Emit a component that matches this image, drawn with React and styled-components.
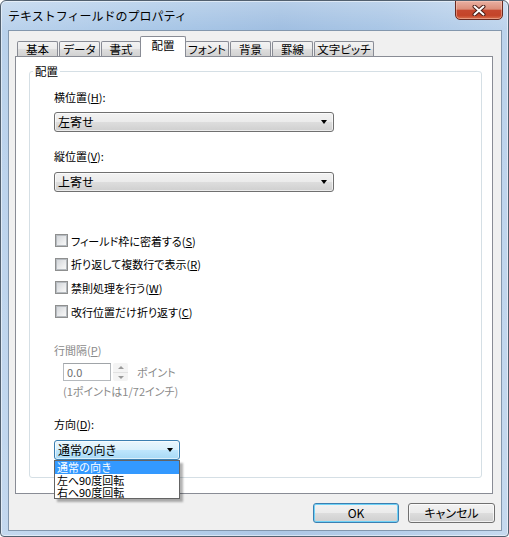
import React from 'react';
import styled, { createGlobalStyle } from 'styled-components';

const GlobalStyle = createGlobalStyle`
  html, body {
    margin: 0;
    padding: 0;
    background: #ffffff;
  }
  body {
    font-family: "Noto Sans CJK JP", "Liberation Sans", sans-serif;
    font-size: 11px;
    color: #000;
    font-feature-settings: "palt";
  }
  * {
    box-sizing: border-box;
  }
`;

const WindowS = styled.div`
  width: 509px;
  height: 537px;
  display: flex;
  flex-direction: column;
  border: 1px solid #52606f;
  border-radius: 6px 6px 4px 4px;
  overflow: hidden;
  background:
    linear-gradient(to bottom, rgba(255,255,255,0.25), rgba(255,255,255,0) 30px, rgba(255,255,255,0.15) 100%),
    linear-gradient(to right, #bad2ec 0%, #a9c7e7 30%, #9fbee1 55%, #a8c5e5 75%, #bcd3ec 100%);
  box-shadow: inset 0 0 0 1px rgba(255,255,255,0.5);
`;

const TitleBarS = styled.div`
  height: 29px;
  flex-shrink: 0;
  display: flex;
  align-items: flex-start;
  padding: 0 5px 0 7px;
`;

const TitleS = styled.div`
  flex: 1;
  align-self: center;
  font-size: 12px;
  line-height: 14px;
  margin-top: 1px;
  color: #000;
  font-feature-settings: normal;
`;

const CloseButtonS = styled.div`
  width: 48px;
  height: 20px;
  margin-top: -1px;
  border: 1px solid #6a2a20;
  border-radius: 0 0 5px 5px;
  background: linear-gradient(to bottom, #e9b0a2 0%, #dc8e7a 45%, #c6482f 52%, #c44429 80%, #d9704e 100%);
  box-shadow: inset 0 0 0 1px rgba(255, 210, 195, 0.45);
  display: flex;
  align-items: center;
  justify-content: center;
`;

const ClientS = styled.div`
  flex: 1;
  margin: 0 6px 5px 7px;
  background: #f0f0f0;
  border: 1px solid #8397ad;
  padding: 5px 8px 0 6px;
  display: flex;
  flex-direction: column;
`;

const TabStripS = styled.div`
  display: flex;
  align-items: flex-end;
  height: 20px;
  padding-left: 2px;
  gap: 1px;
  position: relative;
  z-index: 1;
`;

const TabS = styled.div`
  width: ${({ $w }) => $w}px;
  height: ${({ $active }) => ($active ? 21 : 15)}px;
  margin: ${({ $active }) => ($active ? '0 -2px -1px -2px' : '0')};
  padding-top: ${({ $active }) => ($active ? 2 : 1)}px;
  border: 1px solid #898c95;
  border-bottom: none;
  border-radius: 2px 2px 0 0;
  background: ${({ $active }) =>
    $active ? '#ffffff' : 'linear-gradient(to bottom, #f3f3f3 0%, #ebebeb 50%, #dedede 51%, #d2d2d2 100%)'};
  display: flex;
  justify-content: center;
  align-items: flex-start;
  font-size: 11.5px;
  line-height: 13px;
`;

const PanelS = styled.div`
  height: 438px;
  flex-shrink: 0;
  border: 1px solid #898c95;
  background: #ffffff;
  display: flex;
  flex-direction: column;
`;

const GroupBoxS = styled.fieldset`
  flex: 1;
  margin: 8px 10px 15px 13px;
  padding: 0;
  min-width: 0;
  border: 1px solid #d5dfe5;
  border-radius: 3px;
`;

const LegendS = styled.legend`
  margin-left: 3px;
  padding: 0 2px;
  font-size: 11.5px;
  line-height: 13px;
`;

const GroupContentS = styled.div`
  display: flex;
  flex-direction: column;
  align-items: flex-start;
  padding-left: 24px;
`;

const FieldLabelS = styled.div`
  font-size: 11px;
  line-height: 14px;
  margin-top: ${({ $mt }) => $mt}px;
  margin-left: ${({ $ml }) => $ml || 0}px;
  color: ${({ $disabled }) => ($disabled ? '#8a8a8a' : '#000')};
`;

const ComboWrapS = styled.div`
  position: relative;
  margin-top: ${({ $mt }) => $mt}px;
`;

const ComboS = styled.div`
  width: ${({ $w }) => $w}px;
  height: 20px;
  border: 1px solid ${({ $open }) => ($open ? '#3c7fb1' : '#707070')};
  border-radius: 3px;
  background: ${({ $open }) =>
    $open
      ? 'linear-gradient(to bottom, #eaf6fd 0%, #d9f0fc 50%, #bee6fd 51%, #a7d9f5 100%)'
      : 'linear-gradient(to bottom, #f2f2f2 0%, #ebebeb 50%, #dddddd 51%, #cfcfcf 100%)'};
  box-shadow: inset 0 0 0 1px rgba(255, 255, 255, 0.6);
  display: flex;
  align-items: center;
  justify-content: space-between;
  padding: 0 6px 0 3px;
  font-size: 12px;
  line-height: 14px;
`;

const ArrowS = styled.span`
  width: 0;
  height: 0;
  border-left: 3.5px solid transparent;
  border-right: 3.5px solid transparent;
  border-top: 4px solid #000;
`;

const ListS = styled.div`
  position: absolute;
  top: 100%;
  left: 0;
  width: 126px;
  border: 1px solid #646464;
  background: #ffffff;
  box-shadow: 3px 3px 2px rgba(0, 0, 0, 0.3);
  display: flex;
  flex-direction: column;
  z-index: 2;
`;

const ListItemS = styled.div`
  height: 12.3px;
  line-height: 12.3px;
  font-size: 11px;
  padding-left: 2px;
  font-feature-settings: normal;
  background: ${({ $selected }) => ($selected ? '#3399ff' : 'transparent')};
  color: ${({ $selected }) => ($selected ? '#ffffff' : '#000')};
`;

const CheckListS = styled.div`
  display: flex;
  flex-direction: column;
  margin-top: 37px;
  margin-left: 1px;
`;

const CheckRowS = styled.label`
  display: flex;
  align-items: center;
  gap: 3px;
  height: 23.6px;
  font-size: 11px;
  line-height: 14px;
`;

const CheckBoxS = styled.span`
  width: 13px;
  height: 13px;
  border: 1px solid #8e8f8f;
  background: #ffffff;
  display: flex;
  align-items: center;
  justify-content: center;

  &::after {
    content: '';
    width: 9px;
    height: 9px;
    border: 1px solid #b6bbc0;
    background: linear-gradient(135deg, #d3d6da 0%, #eeeff0 70%, #f7f7f7 100%);
  }
`;

const SpinRowS = styled.div`
  display: flex;
  align-items: center;
  height: 18px;
  margin-top: 6px;
  margin-left: 9px;
`;

const SpinInputS = styled.div`
  width: 48px;
  height: 18px;
  border: 1px solid #b5b9bd;
  border-top-color: #a0a4a8;
  background: #ffffff;
  color: #6d6d6d;
  font-size: 11px;
  line-height: 14px;
  padding-left: 3px;
  display: flex;
  align-items: center;
`;

const SpinButtonsS = styled.div`
  width: 15px;
  height: 18px;
  margin-left: 2px;
  display: flex;
  flex-direction: column;
  background: #f4f4f4;
  border-radius: 2px;
`;

const SpinHalfS = styled.div`
  flex: 1;
  display: flex;
  align-items: center;
  justify-content: center;
  border-bottom: ${({ $top }) => ($top ? '1px solid #e2e2e2' : 'none')};
`;

const SpinArrowS = styled.span`
  width: 0;
  height: 0;
  border-left: 3px solid transparent;
  border-right: 3px solid transparent;
  ${({ $up }) => ($up ? 'border-bottom: 3px solid #9a9a9a;' : 'border-top: 3px solid #9a9a9a;')}
`;

const UnitS = styled.span`
  margin-left: 9px;
  color: #8a8a8a;
  font-size: 11px;
  line-height: 14px;
`;

const ButtonRowS = styled.div`
  display: flex;
  justify-content: flex-end;
  gap: 9px;
  margin-top: 9px;
  margin-right: -2px;
`;

const ButtonS = styled.div`
  width: ${({ $w }) => $w}px;
  height: 20px;
  border: 1px solid ${({ $default }) => ($default ? '#3c7fb1' : '#707070')};
  border-radius: 3px;
  background: linear-gradient(to bottom, #f2f2f2 0%, #ebebeb 50%, #dddddd 51%, #cfcfcf 100%);
  box-shadow: inset 0 0 0 1px ${({ $default }) => ($default ? '#6fd2f7' : 'rgba(255,255,255,0.7)')};
  display: flex;
  align-items: center;
  justify-content: center;
  font-size: 12px;
  line-height: 14px;
`;

const tabs = [
  { label: '基本', w: 41 },
  { label: 'データ', w: 41 },
  { label: '書式', w: 40 },
  { label: '配置', w: 46, active: true },
  { label: 'フォント', w: 44 },
  { label: '背景', w: 41 },
  { label: '罫線', w: 41 },
  { label: '文字ピッチ', w: 60 },
];

const checks = [
  ['フィールド枠に密着する(', 'S', ')'],
  ['折り返して複数行で表示(', 'R', ')'],
  ['禁則処理を行う(', 'W', ')'],
  ['改行位置だけ折り返す(', 'C', ')'],
];

const App = () => {
  return (
    <WindowS>
      <GlobalStyle />
      <TitleBarS>
        <TitleS>テキストフィールドのプロパティ</TitleS>
        <CloseButtonS>
          <svg width="14" height="11" viewBox="0 0 14 11">
            <path d="M2.5 1.5 L11.5 9.5 M11.5 1.5 L2.5 9.5" stroke="#4a1d16" strokeWidth="4" strokeLinecap="round" />
            <path d="M2.5 1.5 L11.5 9.5 M11.5 1.5 L2.5 9.5" stroke="#ffffff" strokeWidth="2" strokeLinecap="round" />
          </svg>
        </CloseButtonS>
      </TitleBarS>

      <ClientS>
        <TabStripS>
          {tabs.map((t) => (
            <TabS key={t.label} $w={t.w} $active={t.active}>
              {t.label}
            </TabS>
          ))}
        </TabStripS>

        <PanelS>
          <GroupBoxS>
            <LegendS>配置</LegendS>
            <GroupContentS>
              <FieldLabelS $mt={12}>
                横位置(<u>H</u>):
              </FieldLabelS>
              <ComboWrapS $mt={8}>
                <ComboS $w={280}>
                  <span>左寄せ</span>
                  <ArrowS />
                </ComboS>
              </ComboWrapS>

              <FieldLabelS $mt={17}>
                縦位置(<u>V</u>):
              </FieldLabelS>
              <ComboWrapS $mt={9}>
                <ComboS $w={280}>
                  <span>上寄せ</span>
                  <ArrowS />
                </ComboS>
              </ComboWrapS>

              <CheckListS>
                {checks.map(([a, k, b]) => (
                  <CheckRowS key={k}>
                    <CheckBoxS />
                    <span>
                      {a}
                      <u>{k}</u>
                      {b}
                    </span>
                  </CheckRowS>
                ))}
              </CheckListS>

              <FieldLabelS $mt={20} $disabled>
                行間隔(<u>P</u>)
              </FieldLabelS>
              <SpinRowS>
                <SpinInputS>0.0</SpinInputS>
                <SpinButtonsS>
                  <SpinHalfS $top>
                    <SpinArrowS $up />
                  </SpinHalfS>
                  <SpinHalfS>
                    <SpinArrowS />
                  </SpinHalfS>
                </SpinButtonsS>
                <UnitS>ポイント</UnitS>
              </SpinRowS>
              <FieldLabelS $mt={3} $ml={9} $disabled>
                (1ポイントは1/72インチ)
              </FieldLabelS>

              <FieldLabelS $mt={19}>
                方向(<u>D</u>):
              </FieldLabelS>
              <ComboWrapS $mt={9}>
                <ComboS $w={126} $open>
                  <span>通常の向き</span>
                  <ArrowS />
                </ComboS>
                <ListS>
                  <ListItemS $selected>通常の向き</ListItemS>
                  <ListItemS>左へ90度回転</ListItemS>
                  <ListItemS>右へ90度回転</ListItemS>
                </ListS>
              </ComboWrapS>
            </GroupContentS>
          </GroupBoxS>
        </PanelS>

        <ButtonRowS>
          <ButtonS $w={86} $default>OK</ButtonS>
          <ButtonS $w={87}>キャンセル</ButtonS>
        </ButtonRowS>
      </ClientS>
    </WindowS>
  );
};

export default App;
